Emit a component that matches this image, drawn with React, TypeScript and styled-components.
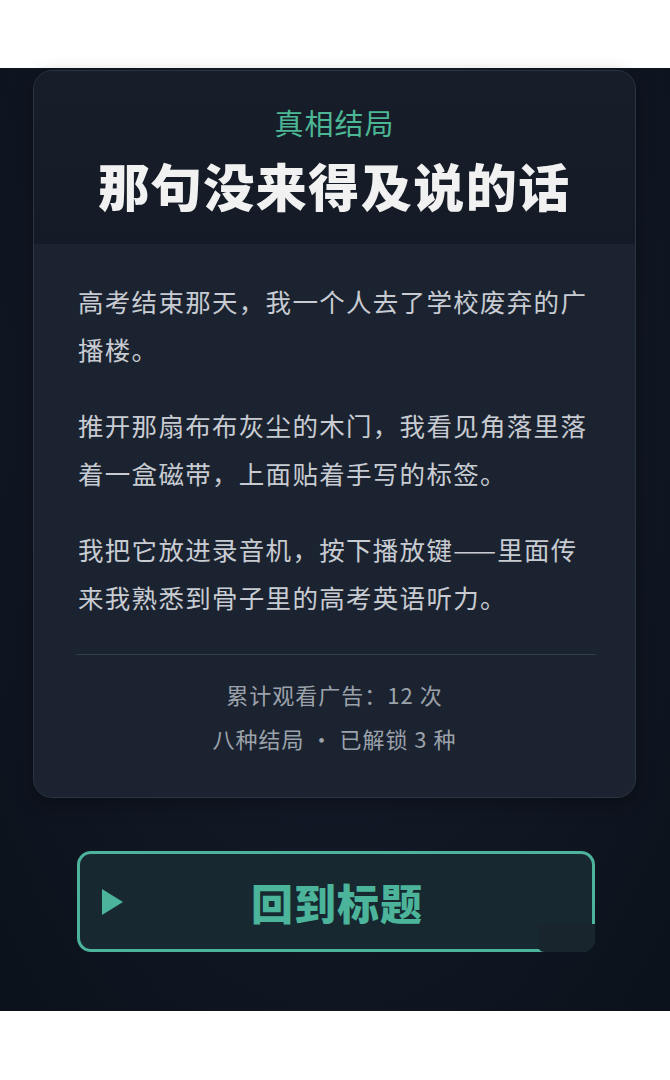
import { FC } from "react";
import styled, { createGlobalStyle } from "styled-components";

// ----------------------------------------------------------------------------

const GlobalStyle = createGlobalStyle`
  html, body {
    margin: 0;
    padding: 0;
    background: #ffffff;
  }
  * {
    box-sizing: border-box;
  }
`;

const FONT = `"Noto Sans CJK SC", "Noto Sans", sans-serif`;

const paragraphs = [
  "高考结束那天，我一个人去了学校废弃的广播楼。",
  "推开那扇布布灰尘的木门，我看见角落里落着一盒磁带，上面贴着手写的标签。",
  "我把它放进录音机，按下播放键——里面传来我熟悉到骨子里的高考英语听力。",
];

// ----------------------------------------------------------------------------

const Screen = styled.div`
  margin-top: 68px;
  height: 943px;
  padding: 2px 34px 0 33px;
  display: flex;
  flex-direction: column;
  align-items: stretch;
  background: radial-gradient(
      ellipse at 50% 35%,
      #182130 0%,
      #111824 55%,
      #0b111a 100%
    );
  font-family: ${FONT};
`;

const Card = styled.section`
  border: 1px solid #2b3442;
  border-radius: 19px;
  overflow: hidden;
  background: #1b2330;
  box-shadow: 0 6px 18px rgba(0, 0, 0, 0.35);
`;

const CardHeader = styled.header`
  height: 173px;
  padding-top: 31px;
  display: flex;
  flex-direction: column;
  align-items: center;
  background: linear-gradient(180deg, #171e2a 0%, #141b26 100%);
`;

const Kicker = styled.div`
  font-size: 29px;
  line-height: 40px;
  color: #4cb794;
  letter-spacing: 1px;
`;

const Title = styled.h1`
  margin: 13px 0 0;
  font-size: 51px;
  line-height: 60px;
  font-weight: 900;
  color: #f1f1f1;
  letter-spacing: 1.5px;
`;

const CardBody = styled.div`
  padding: 33px 42px 0 44px;
  display: flex;
  flex-direction: column;
  gap: 28px;
`;

const Paragraph = styled.p`
  margin: 0;
  font-size: 25.5px;
  line-height: 48px;
  letter-spacing: 1.3px;
  color: #c8ccd2;
`;

const Divider = styled.hr`
  margin: 5px -3px 0 -2px;
  border: none;
  border-top: 1px solid #333c49;
`;

const Stats = styled.div`
  padding: 24px 0 44px;
  display: flex;
  flex-direction: column;
  align-items: center;
  gap: 14px;
`;

const StatLine = styled.div`
  font-size: 22px;
  line-height: 30px;
  color: #9ca2ab;
  letter-spacing: 1px;
  white-space: pre;
`;

const ButtonWrap = styled.div`
  position: relative;
  margin: 53px 41px 0 44px;
`;

const BackButton = styled.button`
  width: 100%;
  height: 101px;
  padding: 0 20px;
  display: flex;
  align-items: center;
  border: 3px solid #4bb49a;
  border-radius: 14px;
  background: #172830;
  cursor: pointer;
  font-family: ${FONT};
`;

const PlayIcon = styled.svg`
  width: 24px;
  height: 28px;
  flex: none;
`;

const ButtonLabel = styled.span`
  flex: 1;
  margin-right: 22px;
  text-align: center;
  font-size: 42px;
  line-height: 60px;
  font-weight: 900;
  color: #4bb49a;
  letter-spacing: 1px;
`;

const CornerMask = styled.div`
  position: absolute;
  right: 0;
  bottom: 0;
  width: 57px;
  height: 28px;
  border-radius: 0 0 12px 6px;
  background: #18252c;
`;

// ----------------------------------------------------------------------------

const App: FC = () => {
  return (
    <>
      <GlobalStyle />
      <Screen>
        <Card>
          <CardHeader>
            <Kicker>真相结局</Kicker>
            <Title>那句没来得及说的话</Title>
          </CardHeader>
          <CardBody>
            {paragraphs.map((text) => (
              <Paragraph key={text}>{text}</Paragraph>
            ))}
            <Divider />
          </CardBody>
          <Stats>
            <StatLine>累计观看广告：12 次</StatLine>
            <StatLine>八种结局 · 已解锁 3 种</StatLine>
          </Stats>
        </Card>
        <ButtonWrap>
          <BackButton>
            <PlayIcon viewBox="0 0 24 28">
              <path d="M2 1 L23 14 L2 27 Z" fill="#4bb49a" />
            </PlayIcon>
            <ButtonLabel>回到标题</ButtonLabel>
          </BackButton>
          <CornerMask />
        </ButtonWrap>
      </Screen>
    </>
  );
};

export default App;
